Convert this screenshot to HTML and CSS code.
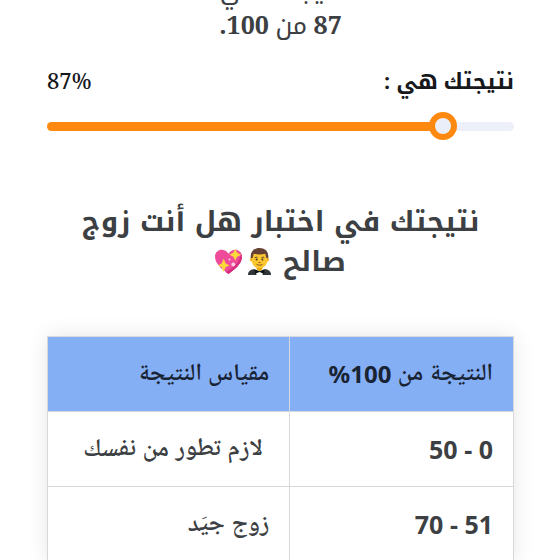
FILE: index.html
```html
<!DOCTYPE html>
<html lang="ar" dir="rtl">
<head>
<meta charset="utf-8">
<meta name="viewport" content="width=device-width, initial-scale=1">
<title>نتيجة الاختبار</title>
<link rel="stylesheet" href="styles.css">
</head>
<body>
<main class="page">
  <p class="summary">نتيجتك هي<br><b>87</b> من <b>100.</b></p>

  <section class="score">
    <div class="score-head">
      <label for="score">نتيجتك هي :</label>
      <output for="score" dir="ltr">87%</output>
    </div>
    <input class="slider" id="score" type="range" min="0" max="100" value="87" dir="ltr">
  </section>

  <h2 class="title">نتيجتك في اختبار هل أنت زوج صالح
    <span class="icons">
      <svg class="icon" viewBox="0 0 28 28" aria-hidden="true">
        <path fill="#30363a" d="M2 28c0-4 3-6 7-6h10c4 0 7 2 7 6z"/>
        <path fill="#fff" d="M9 21h10l-2 7h-6z"/>
        <path fill="#eba800" d="M11 18h6v4l-3 2-3-2z"/>
        <circle cx="6" cy="12" r="2" fill="#f5b51b"/>
        <circle cx="22" cy="12" r="2" fill="#f5b51b"/>
        <path fill="#fcc62f" d="M6 8c0-8 16-8 16 0v5c0 5-4 8-8 8s-8-3-8-8z"/>
        <path fill="#654034" d="M5 11C4 4 8 0 14 0s10 4 9 11l-2-1-1-4c-4 1-8 1-12 0l-1 4z"/>
        <path fill="none" stroke="#654034" d="M9 10q2-1 3 0m4 0q2-1 3 0"/>
        <circle cx="11" cy="12" r="1" fill="#403127"/>
        <circle cx="17" cy="12" r="1" fill="#403127"/>
        <path fill="none" stroke="#89501c" d="M13 15h2m-4 2q3 2 6 0"/>
        <path fill="#101618" d="M9 22l5 2 5-2v5l-5-2-5 2z"/>
      </svg>
      <svg class="icon" viewBox="0 0 28 28" aria-hidden="true">
        <path fill="#ef4b9b" d="M14 27C9 23 0 17 0 9c0-8 10-10 14-3 4-7 14-5 14 3 0 8-9 14-14 18z"/>
        <path fill="#d72c7e" d="M28 9c0 8-9 14-14 18l-3-2c8-4 14-9 16-19z"/>
        <path fill="#ffd83b" d="M9 11l2 5 4 2-4 2-2 5-2-5-4-2 4-2zM21 1l2 4 4 2-4 2-2 4-2-4-4-2 4-2z"/>
        <circle cx="19" cy="17" r="2" fill="#ffd1e6"/>
        <circle cx="15" cy="12" r="1" fill="#ffd1e6"/>
      </svg>
    </span>
  </h2>

  <table class="scale">
    <thead>
      <tr><th scope="col">النتيجة من <b>100%</b></th><th scope="col">مقياس النتيجة</th></tr>
    </thead>
    <tbody>
      <tr><td><b>0 - 50</b></td><td>&nbsp;لازم تطور من نفسك</td></tr>
      <tr><td><b>51 - 70</b></td><td>زوج جيَد</td></tr>
    </tbody>
  </table>
</main>
</body>
</html>
```
FILE: styles.css
```css
* { box-sizing: border-box; }

body {
  margin: 0;
  background: #fff;
  color: #3c4043;
  font-family: "Noto Sans", "Open Sans", "Noto Naskh Arabic UI", "Noto Naskh Arabic", "DejaVu Sans", sans-serif;
}

.page {
  height: 100vh;
  overflow: hidden;
  padding: 0 46px 0 47px;
}

.summary {
  margin: -28px 0 0;
  font-family: "Noto Serif", "Liberation Serif", "Noto Kufi Arabic", "DejaVu Sans", serif;
  font-size: 25px;
  line-height: 35px;
  text-align: center;
}

.score { margin-top: 21px; }

.score-head {
  display: flex;
  justify-content: space-between;
  color: #17181c;
  font-family: "Noto Serif", "Liberation Serif", "Noto Kufi Arabic", "DejaVu Sans", serif;
  font-size: 22px;
  font-weight: 700;
  line-height: 34px;
}

.score-head output { font-weight: 500; }

.slider {
  display: block;
  width: 100%;
  height: 28px;
  margin: 15px 0 0;
  appearance: none;
  background: none;
}

.slider::-webkit-slider-runnable-track {
  height: 9px;
  border-radius: 5px;
  background: linear-gradient(to right, #ff890e 85%, #edf0f8 85%);
}

.slider::-webkit-slider-thumb {
  width: 28px;
  height: 28px;
  margin-top: -10px;
  appearance: none;
  border: 6px solid #ff890e;
  border-radius: 50%;
  background: #e9eef8;
}

.title {
  margin: 62px 0 0;
  padding: 0 30px;
  font-family: "Noto Kufi Arabic", "DejaVu Sans", sans-serif;
  font-size: 28px;
  line-height: 40px;
  text-align: center;
}

.icons {
  display: inline-flex;
  gap: 4px;
  vertical-align: -4px;
}

.icon {
  width: 27px;
  height: 27px;
}

.scale {
  width: 100%;
  margin-top: 54px;
  border-collapse: collapse;
  table-layout: fixed;
  box-shadow: 0 0 20px rgba(0, 0, 0, 0.1);
  font-size: 25px;
  line-height: 34px;
}

.scale th,
.scale td {
  height: 75px;
  padding: 0 20px 0 18px;
  border: 1px solid #d7d8dc;
  font-weight: 600;
  text-align: right;
}

.scale b { font-weight: 700; }

.scale th:first-child { width: 48%; }

.scale th {
  background: #85aff5;
  color: #182334;
  font-size: 24px;
}
```
